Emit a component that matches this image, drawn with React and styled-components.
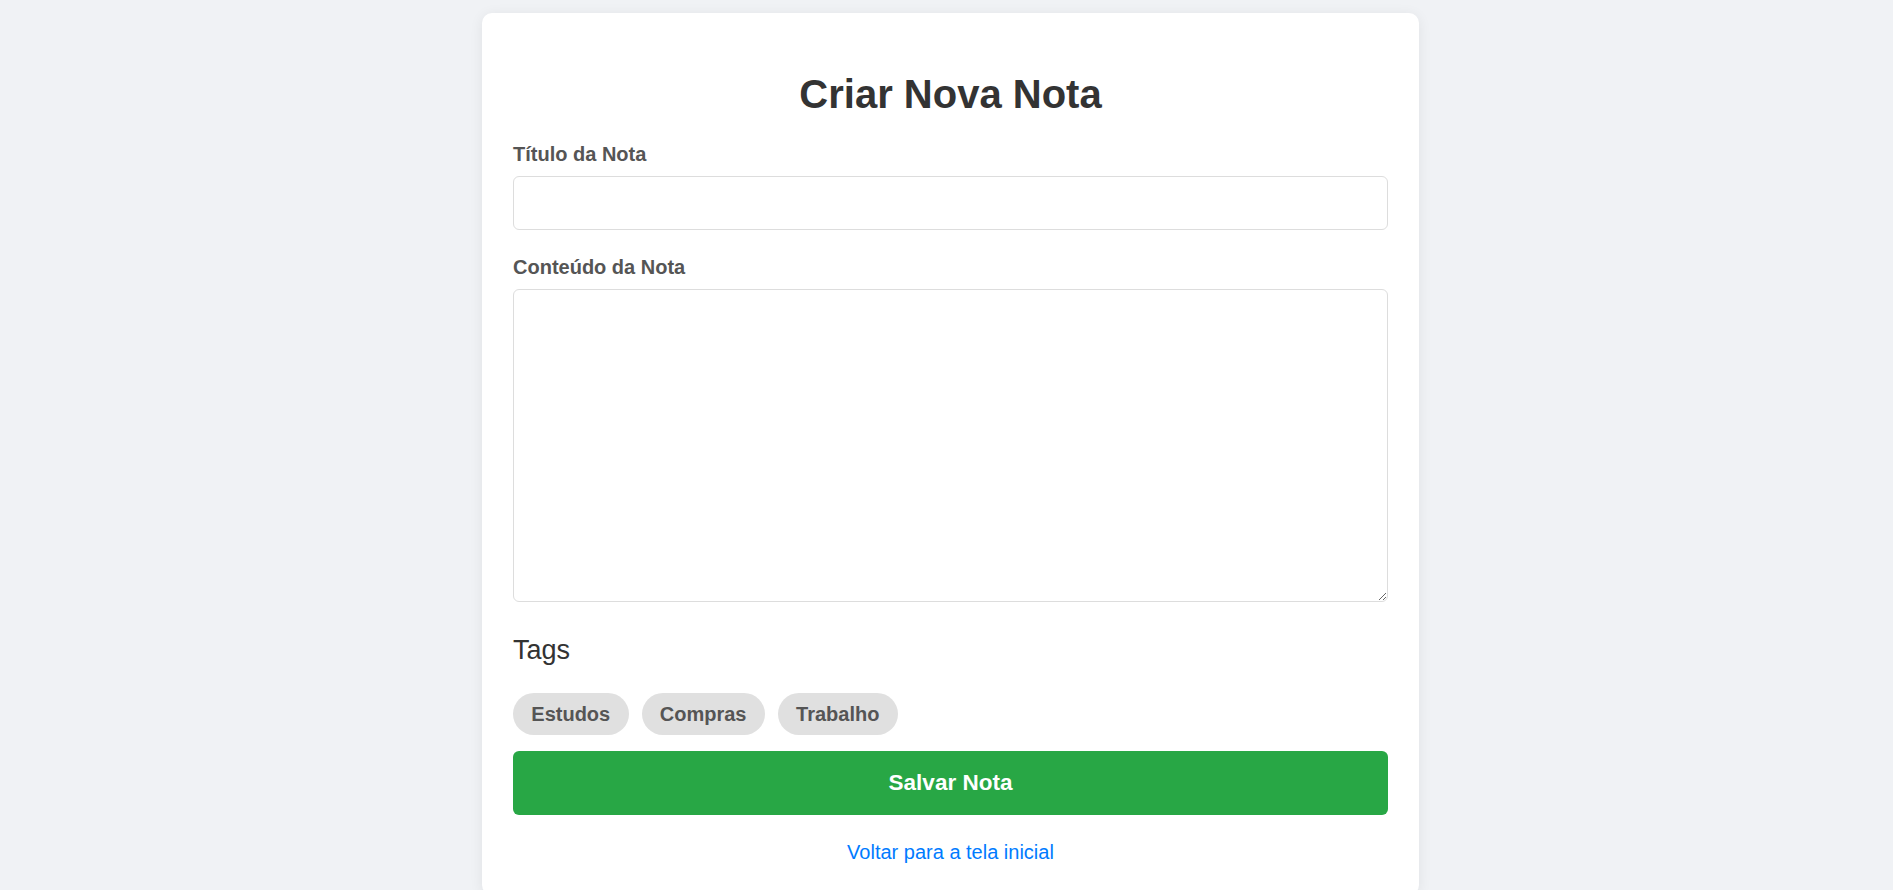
import React from 'react';
import styled, { createGlobalStyle } from 'styled-components';

const GlobalStyle = createGlobalStyle`
  html, body {
    margin: 0;
    padding: 0;
    background: #f0f2f5;
    overflow: hidden;
  }
  body {
    font-family: "Liberation Sans", Arial, sans-serif;
  }
  * {
    box-sizing: border-box;
  }
`;

const Page = styled.div`
  display: flex;
  justify-content: center;
  padding: 13px 0 0 8px;
  min-height: 890px;
`;

const Card = styled.div`
  width: 937px;
  background: #fff;
  border-radius: 10px;
  padding: 31px 31px 31px;
  box-shadow: 0 2px 14px rgba(0, 0, 0, 0.07);
  align-self: flex-start;
`;

const Title = styled.h1`
  font-size: 40px;
  line-height: 46px;
  font-weight: bold;
  color: #333;
  text-align: center;
  margin: 27px 0 26px;
`;

const Field = styled.div`
  margin-bottom: 26px;
`;

const Label = styled.label`
  display: block;
  font-size: 20px;
  line-height: 23px;
  font-weight: bold;
  color: #555;
  margin-bottom: 10px;
`;

const Input = styled.input`
  display: block;
  width: 100%;
  height: 54px;
  border: 1px solid #ddd;
  border-radius: 6px;
  padding: 12px 15px;
  font-size: 20px;
  font-family: inherit;
  outline: none;
`;

const TextArea = styled.textarea`
  display: block;
  width: 100%;
  height: 313px;
  border: 1px solid #ddd;
  border-radius: 6px;
  padding: 12px 15px;
  font-size: 20px;
  font-family: inherit;
  outline: none;
`;

const TagsHeading = styled.h3`
  font-size: 27px;
  line-height: 30px;
  font-weight: normal;
  color: #333;
  margin: 33px 0 28px;
`;

const TagList = styled.div`
  display: flex;
  gap: 13px;
  margin-bottom: 16px;
`;

const Tag = styled.button`
  background: #e0e0e0;
  border: none;
  border-radius: 21px;
  height: 42px;
  padding: 0 18.3px;
  font-family: inherit;
  font-size: 20px;
  font-weight: bold;
  color: #555;
  cursor: pointer;
`;

const SaveButton = styled.button`
  display: block;
  width: 100%;
  height: 64px;
  background: #28a745;
  border: none;
  border-radius: 6px;
  color: #fff;
  font-family: inherit;
  font-size: 22.5px;
  font-weight: bold;
  cursor: pointer;
`;

const BackLink = styled.a`
  display: block;
  text-align: center;
  margin-top: 26px;
  font-size: 20px;
  line-height: 23px;
  color: #007bff;
  text-decoration: none;
`;

const tags = ['Estudos', 'Compras', 'Trabalho'];

const App = () => (
  <>
    <GlobalStyle />
    <Page>
      <Card>
        <Title>Criar Nova Nota</Title>
        <Field>
          <Label htmlFor="titulo">Título da Nota</Label>
          <Input id="titulo" type="text" />
        </Field>
        <Field>
          <Label htmlFor="conteudo">Conteúdo da Nota</Label>
          <TextArea id="conteudo" />
        </Field>
        <TagsHeading>Tags</TagsHeading>
        <TagList>
          {tags.map((t) => (
            <Tag key={t} type="button">{t}</Tag>
          ))}
        </TagList>
        <SaveButton type="button">Salvar Nota</SaveButton>
        <BackLink href="#">Voltar para a tela inicial</BackLink>
      </Card>
    </Page>
  </>
);

export default App;
